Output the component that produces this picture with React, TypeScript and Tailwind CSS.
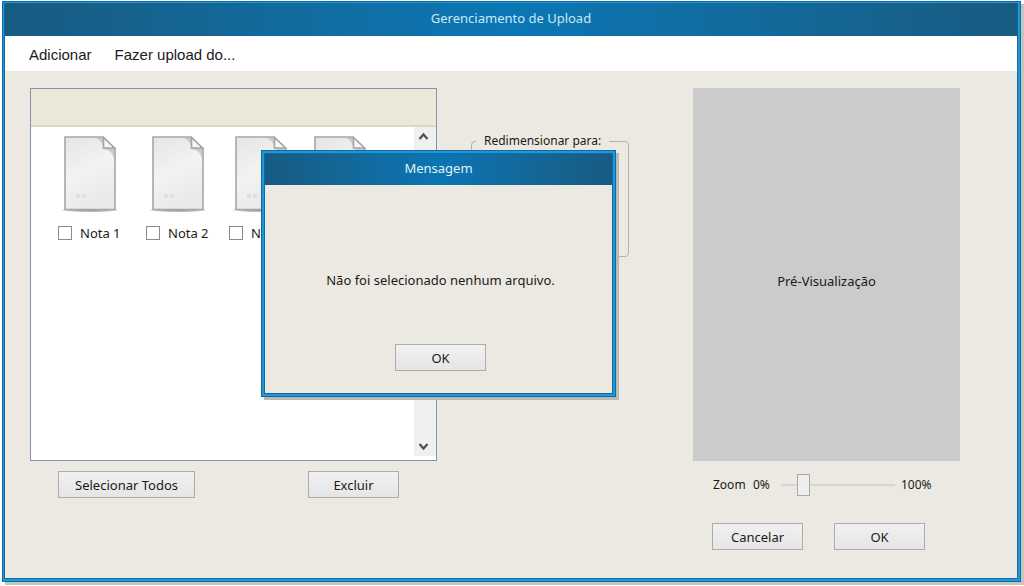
import { useId, type ReactNode } from "react";

const files = ["Nota 1", "Nota 2", "Nota 3", "Nota 4"];

function FileIcon() {
  const id = useId();
  return (
    <svg width="60" height="80" viewBox="0 0 60 80" aria-hidden="true">
      <defs>
        <linearGradient id={id + "p"} x1="0" y1="0" x2="0.4" y2="1">
          <stop offset="0" stopColor="#e4e4e4" />
          <stop offset="0.55" stopColor="#f3f3f3" />
          <stop offset="1" stopColor="#e9e9e9" />
        </linearGradient>
        <radialGradient id={id + "s"}>
          <stop offset="0" stopColor="#8c8c8c" />
          <stop offset="0.7" stopColor="#c4c4c4" />
          <stop offset="1" stopColor="#ffffff" />
        </radialGradient>
      </defs>
      <ellipse cx="30" cy="76" rx="30" ry="2.5" fill={`url(#${id}s)`} />
      <path d="M5 3H43L55 14.500V75.500H5Z" fill={`url(#${id}p)`} stroke="#a6a6a6" strokeWidth="1.600" />
      <path d="M36 4H43L54 14.500V24Q52 16 43.500 15Q43 7 36 4Z" fill="#c9c9c9" />
      <path d="M43.500 3.500V14H54.500Z" fill="#f7f7f7" stroke="#a6a6a6" strokeWidth="1.600" />
      <path d="M16 60h4v4h-4zM22 60h4v4h-4z" fill="#e0e0e0" />
    </svg>
  );
}

function Chevron({ up = false }: { up?: boolean }) {
  return (
    <svg width="11" height="9" viewBox="0 0 11 9" fill="none" stroke="#505050" strokeWidth="2.200" aria-hidden="true">
      <path d={up ? "M1.500 7L5.500 2.500L9.500 7" : "M1.500 2L5.500 6.500L9.500 2"} />
    </svg>
  );
}

function Button({ children, wide = false }: { children: ReactNode; wide?: boolean }) {
  return (
    <button
      type="button"
      className={
        "h-[27px] border border-[#acacac] bg-linear-to-b from-[#f1f1f1] to-[#e5e5e5] text-[13px] leading-5 text-[#1a1a1a] " +
        (wide ? "w-[137px]" : "w-[91px]")
      }
    >
      {children}
    </button>
  );
}

function Message() {
  return (
    <div
      role="dialog"
      aria-labelledby="message-title"
      className="absolute left-[261px] top-[150px] border border-[#0b6ba8] bg-[#2497d3] p-[2px] shadow-[3px_3px_0_#b9b9b5]"
    >
      <div className="h-[241px] w-[349px] border border-[#0b6ba8] bg-[#ece9e2]">
        <h2
          id="message-title"
          className="bg-linear-to-r from-[#175b81] via-[#0a75b3] to-[#175b81] pt-1 pb-[7px] text-center text-[13px] leading-5 text-[#e0f1fa]"
        >
          Mensagem
        </h2>
        <div className="flex flex-col items-center pt-[85px] pl-1">
          <p className="text-[13px] leading-5 text-[#1a1a1a]">Não foi selecionado nenhum arquivo.</p>
          <div className="mt-[54px]">
            <Button>OK</Button>
          </div>
        </div>
      </div>
    </div>
  );
}

export default function App() {
  return (
    <div className="relative min-h-screen bg-white pt-px pr-[3px] pb-1 pl-[2px] font-['Noto_Sans',sans-serif] text-[#1a1a1a]">
      <div className="border border-[#0b6ba8] bg-[#2497d3] p-px pr-[2px] pb-[2px] shadow-[3px_3px_0_#c3c7c0]">
        <div className="flex min-h-[576px] flex-col border border-t-0 border-[#0b6ba8] bg-[#ece9e2]">
          <h1 className="bg-linear-to-r from-[#175b81] via-[#0a77b5] to-[#175b81] pt-[5px] pb-2 text-center text-[13px] leading-5 text-[#c9e9f7]">
            Gerenciamento de Upload
          </h1>
          <nav className="flex h-[35px] items-center gap-[23px] bg-white pt-[3px] pl-6 font-['Liberation_Sans',sans-serif] text-[15px] leading-5">
            <button type="button">Adicionar</button>
            <button type="button">Fazer upload do...</button>
          </nav>
          <main className="flex pt-[17px] pr-[57px] pl-[25px]">
            <section aria-label="Arquivos" className="min-w-0 flex-[407]">
              <div className="flex h-[373px] flex-col border border-[#8494b0] bg-white">
                <div className="h-[38px] shrink-0 border-b-2 border-[#dad7c2] bg-[#ebe8d9]" />
                <div className="flex flex-1">
                  <ul className="grid flex-1 grid-cols-[88px_83px_79px_auto] content-start overflow-hidden pt-[7px] pl-[27px]">
                    {files.map((name) => (
                      <li key={name}>
                        <label className="flex flex-col gap-[9px]">
                          <span className="pl-[2px]">
                            <FileIcon />
                          </span>
                          <span className="flex items-center gap-2 text-[13px] leading-5 whitespace-nowrap">
                            <input
                              type="checkbox"
                              className="size-3.5 shrink-0 appearance-none border border-[#8e8b83] bg-white checked:bg-[#0b6ba8]"
                            />
                            {name}
                          </span>
                        </label>
                      </li>
                    ))}
                  </ul>
                  <div className="mb-1 flex w-[22px] flex-col items-center justify-between bg-[#f0f0f0] py-[5px] pr-[3px]">
                    <button type="button" aria-label="Rolar para cima">
                      <Chevron up />
                    </button>
                    <button type="button" aria-label="Rolar para baixo">
                      <Chevron />
                    </button>
                  </div>
                </div>
              </div>
              <div className="mt-[10px] flex justify-between pr-[38px] pl-7">
                <Button wide>Selecionar Todos</Button>
                <Button>Excluir</Button>
              </div>
            </section>
            <div className="ml-[34px] min-w-0 flex-[158] pt-[43px]">
              <fieldset className="h-[126px] min-w-0 rounded border border-[#b5b2aa]">
                <legend className="ml-1 px-2 text-xs leading-5 whitespace-nowrap">Redimensionar para:</legend>
              </fieldset>
            </div>
            <section aria-label="Imagem" className="ml-16 min-w-0 flex-[267]">
              <div className="flex h-[373px] items-center justify-center bg-[#cbcbcb] pt-3 text-[13px] leading-5">
                Pré-Visualização
              </div>
              <div className="mt-[13px] flex items-center pl-5 text-xs leading-5">
                <label htmlFor="zoom" className="w-10">
                  Zoom
                </label>
                <span className="w-7">0%</span>
                <input
                  id="zoom"
                  type="range"
                  defaultValue={16}
                  className="h-[22px] w-[114px] appearance-none bg-transparent [&::-webkit-slider-runnable-track]:h-[2px] [&::-webkit-slider-runnable-track]:bg-[#d6d5d2] [&::-webkit-slider-thumb]:-mt-[10px] [&::-webkit-slider-thumb]:h-[22px] [&::-webkit-slider-thumb]:w-[13px] [&::-webkit-slider-thumb]:appearance-none [&::-webkit-slider-thumb]:border [&::-webkit-slider-thumb]:border-[#a9a9a9] [&::-webkit-slider-thumb]:bg-[#eeeeee]"
                />
                <span className="ml-[6px]">100%</span>
              </div>
              <div className="mt-[27px] flex gap-[31px] pl-[19px]">
                <Button>Cancelar</Button>
                <Button>OK</Button>
              </div>
            </section>
          </main>
        </div>
      </div>
      <Message />
    </div>
  );
}
